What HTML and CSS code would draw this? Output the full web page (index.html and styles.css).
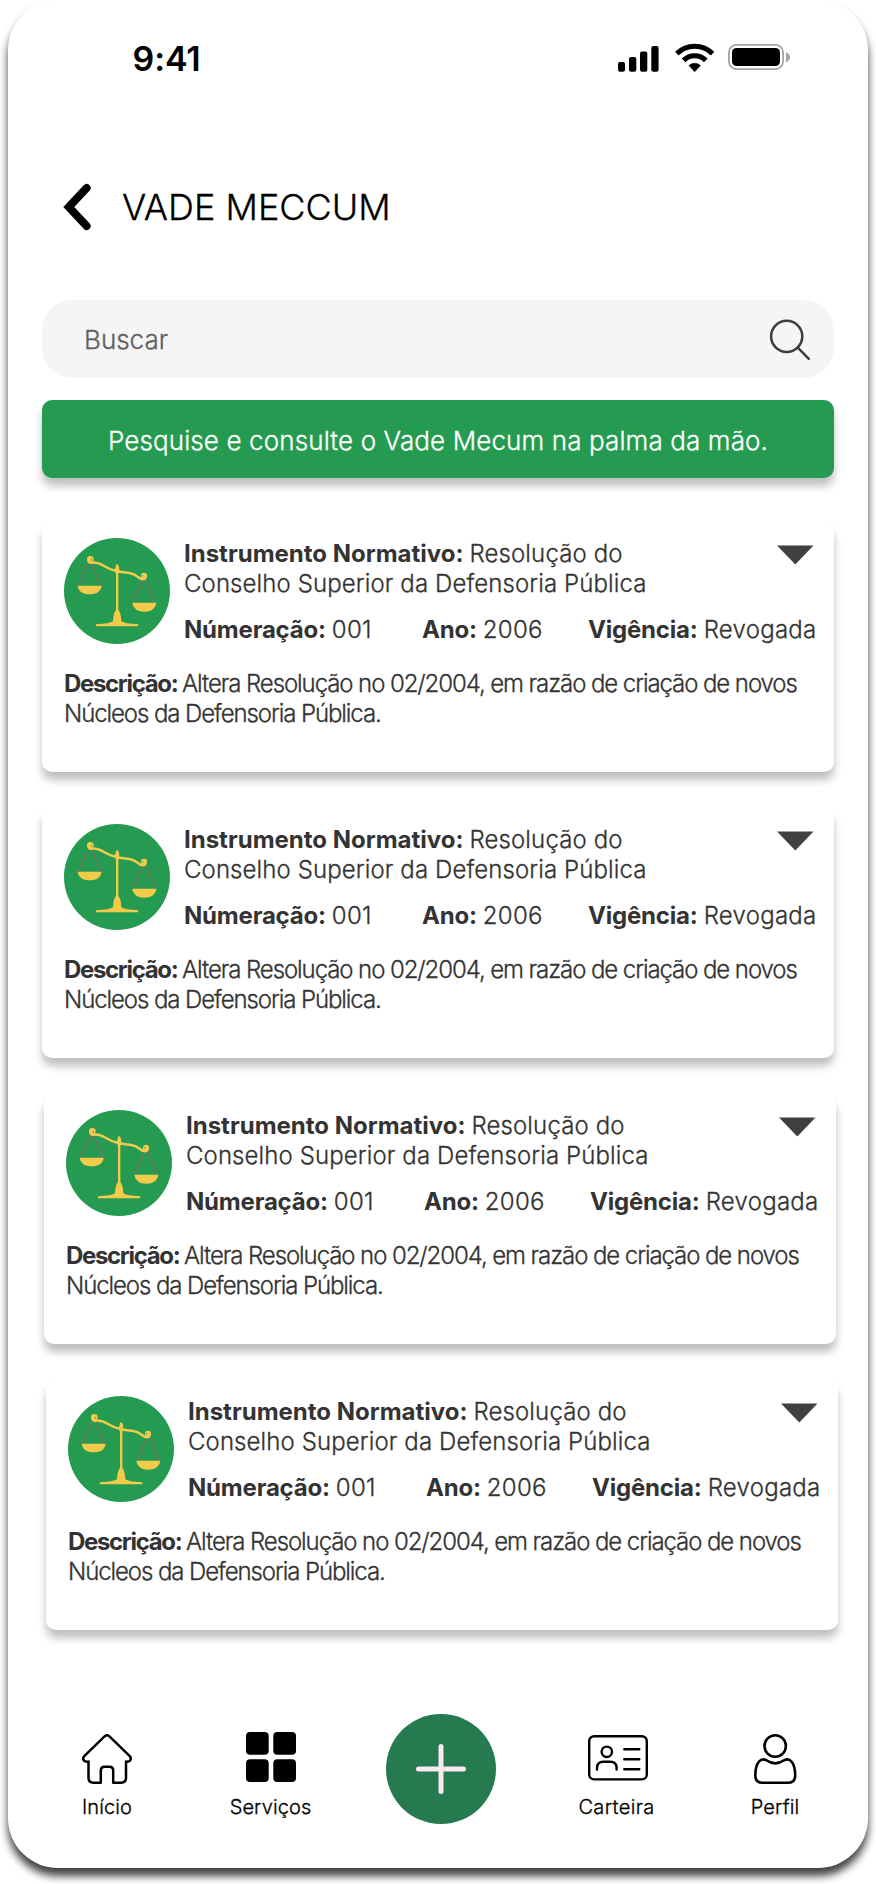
FILE: index.html
```html
<!DOCTYPE html>
<html lang="pt-BR">
<head>
<meta charset="utf-8">
<title>Vade Meccum</title>
<link rel="stylesheet" href="styles.css">
</head>
<body>
<svg width="0" height="0" class="defs" aria-hidden="true">
  <symbol id="scales" viewBox="24 24 318 318">
    <circle cx="183" cy="183" r="159" fill="#249b50"/>
    <g fill="none" stroke="#6f7468" stroke-width="4.5">
      <path d="M97 98 L67 168 M106 98 L135 168 M260 148 L231 219 M269 148 L298 219"/>
    </g>
    <g fill="#f2cb4b">
      <path d="M65 167 H137 C135 184 121 193 101 193 C81 193 67 184 65 167 Z"/>
      <path d="M229 218 H301 C299 235 285 245 265 245 C245 245 231 235 229 218 Z"/>
      <path d="M179 110 Q180 103 183 102 Q187 103 189 111 L190 121 L187 132 V240 Q195 248 196 274 Q205 281 247 283 V289 H120 V283 Q162 281 171 274 Q172 248 180 240 V132 L176 121 Z"/>
      <circle cx="103" cy="88" r="10"/>
      <circle cx="264" cy="138" r="9.5"/>
    </g>
    <path d="M98 90 Q97 100 107 98 Q124 96 144 108 Q164 120 183 124 Q202 128 220 129 Q234 131 246 141 Q258 151 267 146" fill="none" stroke="#f2cb4b" stroke-linecap="round" stroke-width="7.5"/>
    <path d="M105 86 L110 90 L105 92 Z M257 134 L262 137 L258 140 Z" fill="#249b50"/>
  </symbol>
</svg>

<div class="phone">
  <div class="status">
    <span class="time">9:41</span>
    <svg class="status-icons" width="173" height="30" viewBox="618 43 173 30">
      <rect x="618" y="62" width="7" height="9.7" rx="2"/>
      <rect x="629" y="57" width="7.3" height="14.7" rx="2"/>
      <rect x="640" y="51.4" width="7.3" height="20.3" rx="2"/>
      <rect x="651.3" y="46" width="7.3" height="25.7" rx="2"/>
      <g fill="none" stroke="#000" stroke-width="5">
        <path d="M676.8 53.6 A25.5 25.5 0 0 1 712.6 53.6"/>
        <path d="M683.6 60.4 A15.8 15.8 0 0 1 705.8 60.4"/>
      </g>
      <path d="M689 65.5 A8.5 8.5 0 0 1 700.4 65.5 L694.7 71.8 Z" stroke="#000" stroke-width=".6" stroke-linejoin="round"/>
      <rect x="728.9" y="44.9" width="54.2" height="24.2" rx="7.5" fill="none" stroke="#a6a6a6" stroke-width="1.8"/>
      <rect x="732" y="48" width="48" height="18" rx="4.5"/>
      <path d="M786 52.3 Q790 54 790 57.2 Q790 60.5 786 62.2 Z" fill="#a6a6a6"/>
    </svg>
  </div>

  <header class="header">
    <svg width="30" height="50" viewBox="62 182 30 50" fill="none" stroke="#000" stroke-width="8" stroke-linecap="round" stroke-linejoin="miter"><path d="M86.6 188 L68.8 207 L86.6 226"/></svg>
    <h1>VADE MECCUM</h1>
  </header>

  <div class="search">
    <span>Buscar</span>
    <svg width="42" height="42" viewBox="769 319 42 42" fill="none" stroke="#3d3d3d" stroke-width="2.5" stroke-linecap="round"><circle cx="786.7" cy="336.3" r="15.6"/><path d="M797.8 347.6 L808.8 358.8"/></svg>
  </div>
  <div class="banner">Pesquise e consulte o Vade Mecum na palma da mão.</div>

  <main class="list">
    <article class="card">
      <div class="card-top">
        <svg class="logo" width="106" height="106"><use href="#scales"/></svg>
        <div class="info">
          <p class="title"><b>Instrumento Normativo:</b> <span>Resolução do</span><br>Conselho Superior da Defensoria Pública</p>
          <div class="meta"><div><b>Númeração:</b> 001</div><div><b>Ano:</b> 2006</div><div><b>Vigência:</b> Revogada</div></div>
        </div>
        <svg class="caret" width="37" height="20" viewBox="0 0 37 20"><path d="M0 .5 H36.5 L18.3 19.5 Z"/></svg>
      </div>
      <p class="desc"><b>Descrição:</b> Altera Resolução no 02/2004, em razão de criação de novos<br>Núcleos da Defensoria Pública.</p>
    </article>
    <article class="card">
      <div class="card-top">
        <svg class="logo" width="106" height="106"><use href="#scales"/></svg>
        <div class="info">
          <p class="title"><b>Instrumento Normativo:</b> <span>Resolução do</span><br>Conselho Superior da Defensoria Pública</p>
          <div class="meta"><div><b>Númeração:</b> 001</div><div><b>Ano:</b> 2006</div><div><b>Vigência:</b> Revogada</div></div>
        </div>
        <svg class="caret" width="37" height="20" viewBox="0 0 37 20"><path d="M0 .5 H36.5 L18.3 19.5 Z"/></svg>
      </div>
      <p class="desc"><b>Descrição:</b> Altera Resolução no 02/2004, em razão de criação de novos<br>Núcleos da Defensoria Pública.</p>
    </article>
    <article class="card shift-1">
      <div class="card-top">
        <svg class="logo" width="106" height="106"><use href="#scales"/></svg>
        <div class="info">
          <p class="title"><b>Instrumento Normativo:</b> <span>Resolução do</span><br>Conselho Superior da Defensoria Pública</p>
          <div class="meta"><div><b>Númeração:</b> 001</div><div><b>Ano:</b> 2006</div><div><b>Vigência:</b> Revogada</div></div>
        </div>
        <svg class="caret" width="37" height="20" viewBox="0 0 37 20"><path d="M0 .5 H36.5 L18.3 19.5 Z"/></svg>
      </div>
      <p class="desc"><b>Descrição:</b> Altera Resolução no 02/2004, em razão de criação de novos<br>Núcleos da Defensoria Pública.</p>
    </article>
    <article class="card shift-2">
      <div class="card-top">
        <svg class="logo" width="106" height="106"><use href="#scales"/></svg>
        <div class="info">
          <p class="title"><b>Instrumento Normativo:</b> <span>Resolução do</span><br>Conselho Superior da Defensoria Pública</p>
          <div class="meta"><div><b>Númeração:</b> 001</div><div><b>Ano:</b> 2006</div><div><b>Vigência:</b> Revogada</div></div>
        </div>
        <svg class="caret" width="37" height="20" viewBox="0 0 37 20"><path d="M0 .5 H36.5 L18.3 19.5 Z"/></svg>
      </div>
      <p class="desc"><b>Descrição:</b> Altera Resolução no 02/2004, em razão de criação de novos<br>Núcleos da Defensoria Pública.</p>
    </article>
  </main>

  <nav class="nav">
    <div class="item">
      <svg width="50" height="50" viewBox="0 0 50 50" fill="none" stroke="#000" stroke-width="2.5" stroke-linecap="round" stroke-linejoin="round"><path d="M22.8 2.2 Q25 .4 27.2 2.2 L48 22.4 Q49.6 24.6 48 26.7 Q47 27.8 44 27.6 V43.7 Q44 48.7 39 48.7 H31.2 V36.5 Q31.2 32.7 27.4 32.7 H22.6 Q18.8 32.7 18.8 36.5 V48.7 H11.5 Q6.5 48.7 6.5 43.7 V27.6 Q3 27.8 2 26.7 Q.4 24.6 2 22.4 Z"/></svg>
      <span>Início</span>
    </div>
    <div class="item services">
      <svg width="50" height="50" viewBox="0 0 50 50"><rect width="22.7" height="22.7" rx="4"/><rect x="27.3" width="22.7" height="22.7" rx="4"/><rect y="27.3" width="22.7" height="22.7" rx="4"/><rect x="27.3" y="27.3" width="22.7" height="22.7" rx="4"/></svg>
      <span>Serviços</span>
    </div>
    <div class="add">
      <svg width="50" height="50" viewBox="0 0 50 50" stroke="#fbe8f0" stroke-width="5" stroke-linecap="round"><path d="M25 2.5 V47.5 M2.5 25 H47.5"/></svg>
    </div>
    <div class="item wallet">
      <svg width="60" height="50" viewBox="588 1733 60 50" fill="none" stroke="#000" stroke-width="2.4" stroke-linecap="round"><rect x="589.2" y="1736.2" width="57.6" height="43.2" rx="5"/><circle cx="606.8" cy="1751.8" r="5.2"/><path d="M597 1769.5 V1768 Q597 1761.7 603.3 1761.7 H610.3 Q616.6 1761.7 616.6 1768 V1769.5 M624.3 1749.3 H639.3 M624.3 1759.3 H639.3 M624.3 1769.3 H639.3"/></svg>
      <span>Carteira</span>
    </div>
    <div class="item">
      <svg width="43" height="50" viewBox="753.5 1734 43 50" fill="none" stroke="#000" stroke-width="2.6" stroke-linecap="round" stroke-linejoin="round"><circle cx="774.7" cy="1746" r="10.7"/><path d="M766 1760.3 C771.5 1764.2 778 1764.2 783.5 1760.3 C786 1758.8 789 1759.3 791 1761.5 C793.6 1764.8 794.7 1770 794.7 1775.5 Q794.7 1782.7 787.5 1782.7 H762 Q754.8 1782.7 754.8 1775.5 C754.8 1770 755.9 1764.8 758.5 1761.5 C760.5 1759.3 763.5 1758.8 766 1760.3 Z"/></svg>
      <span>Perfil</span>
    </div>
  </nav>
</div>
</body>
</html>
```
FILE: styles.css
```css
* { box-sizing: border-box; }
body {
  margin: 0;
  height: 1884px;
  overflow: hidden;
  background: #fff;
  font-family: Inter, "Liberation Sans", sans-serif;
  font-weight: 300;
  -webkit-text-stroke-width: .3px;
  color: #333;
}
p, h1 { margin: 0; }
svg { display: block; flex: none; }
.defs { position: absolute; }

.phone {
  display: flex;
  flex-direction: column;
  width: 860px;
  height: 1868px;
  margin: 0 8px;
  border-radius: 50px;
  background: #fff;
  box-shadow: 0 8px 8px rgba(0, 0, 0, .75);
}

.status {
  display: flex;
  justify-content: space-between;
  align-items: center;
  height: 116px;
  padding: 0 77px 0 124.5px;
}
.time {
  font-size: 34px;
  font-weight: 600;
  letter-spacing: -.1px;
  -webkit-text-stroke-width: 0;
  color: #000;
}

.header {
  display: flex;
  align-items: center;
  gap: 30px;
  height: 50px;
  margin-top: 66px;
  padding-left: 54px;
}
.header h1 {
  font-size: 36px;
  font-weight: 300;
  color: #000;
}

.search, .banner {
  display: flex;
  align-items: center;
  flex: none;
  width: 792px;
  height: 78px;
  margin-left: 34px;
  font-size: 26px;
}
.search {
  justify-content: space-between;
  margin-top: 68px;
  padding: 0 23px 0 42px;
  border-radius: 30px;
  background: #f5f5f5;
  color: #606060;
}
.search svg { margin-top: 2px; }
.banner {
  justify-content: center;
  margin-top: 22px;
  padding-top: 3px;
  border-radius: 10px;
  background: #249b50;
  box-shadow: 0 8px 8px rgba(0, 0, 0, .25);
  color: #fff;
  letter-spacing: .12px;
}

.list {
  display: flex;
  flex-direction: column;
  gap: 36px;
  margin: 44px 0 0 34px;
}
.card {
  width: 792px;
  height: 250px;
  padding: 16px 17px 0 22px;
  border-radius: 10px;
  background: #fff;
  box-shadow: 0 8px 8px rgba(0, 0, 0, .25);
  font-size: 24px;
  line-height: 30px;
  white-space: nowrap;
}
.shift-1 { margin-left: 2px; }
.shift-2 { margin-left: 4px; }
.card b {
  margin-right: -1px;
  font-weight: 700;
  -webkit-text-stroke-width: 0;
}
.card-top { display: flex; }
.info { width: 593px; margin-left: 14px; padding-top: 1px; }
.title { letter-spacing: .1px; }
.title b { letter-spacing: 0; }
.title span { letter-spacing: .14px; }
.meta {
  display: grid;
  grid-template-columns: 238px 166px auto;
  margin-top: 16px;
  letter-spacing: .27px;
}
.meta b { letter-spacing: -.2px; }
.caret { margin-top: 7px; fill: #404040; }
.desc { margin-top: 24px; letter-spacing: -1.09px; }
.desc b { letter-spacing: -1.33px; }

.nav {
  display: flex;
  justify-content: space-between;
  height: 110px;
  margin: 84px 43px 0 49px;
  color: #000;
}
.item {
  display: flex;
  flex-direction: column;
  align-items: center;
  gap: 11px;
  width: 100px;
  padding-top: 20px;
  font-size: 20px;
  line-height: 24px;
  letter-spacing: .1px;
}
.services { margin: 0 1px 0 -1px; gap: 13px; padding-top: 18px; }
.wallet { margin: 0 -6px 0 6px; letter-spacing: .35px; gap: 12px; padding-top: 19px; }
.wallet svg { margin-left: 3px; }
.add {
  display: flex;
  align-items: center;
  justify-content: center;
  width: 110px;
  height: 110px;
  border-radius: 50%;
  background: #257a4f;
}
```
